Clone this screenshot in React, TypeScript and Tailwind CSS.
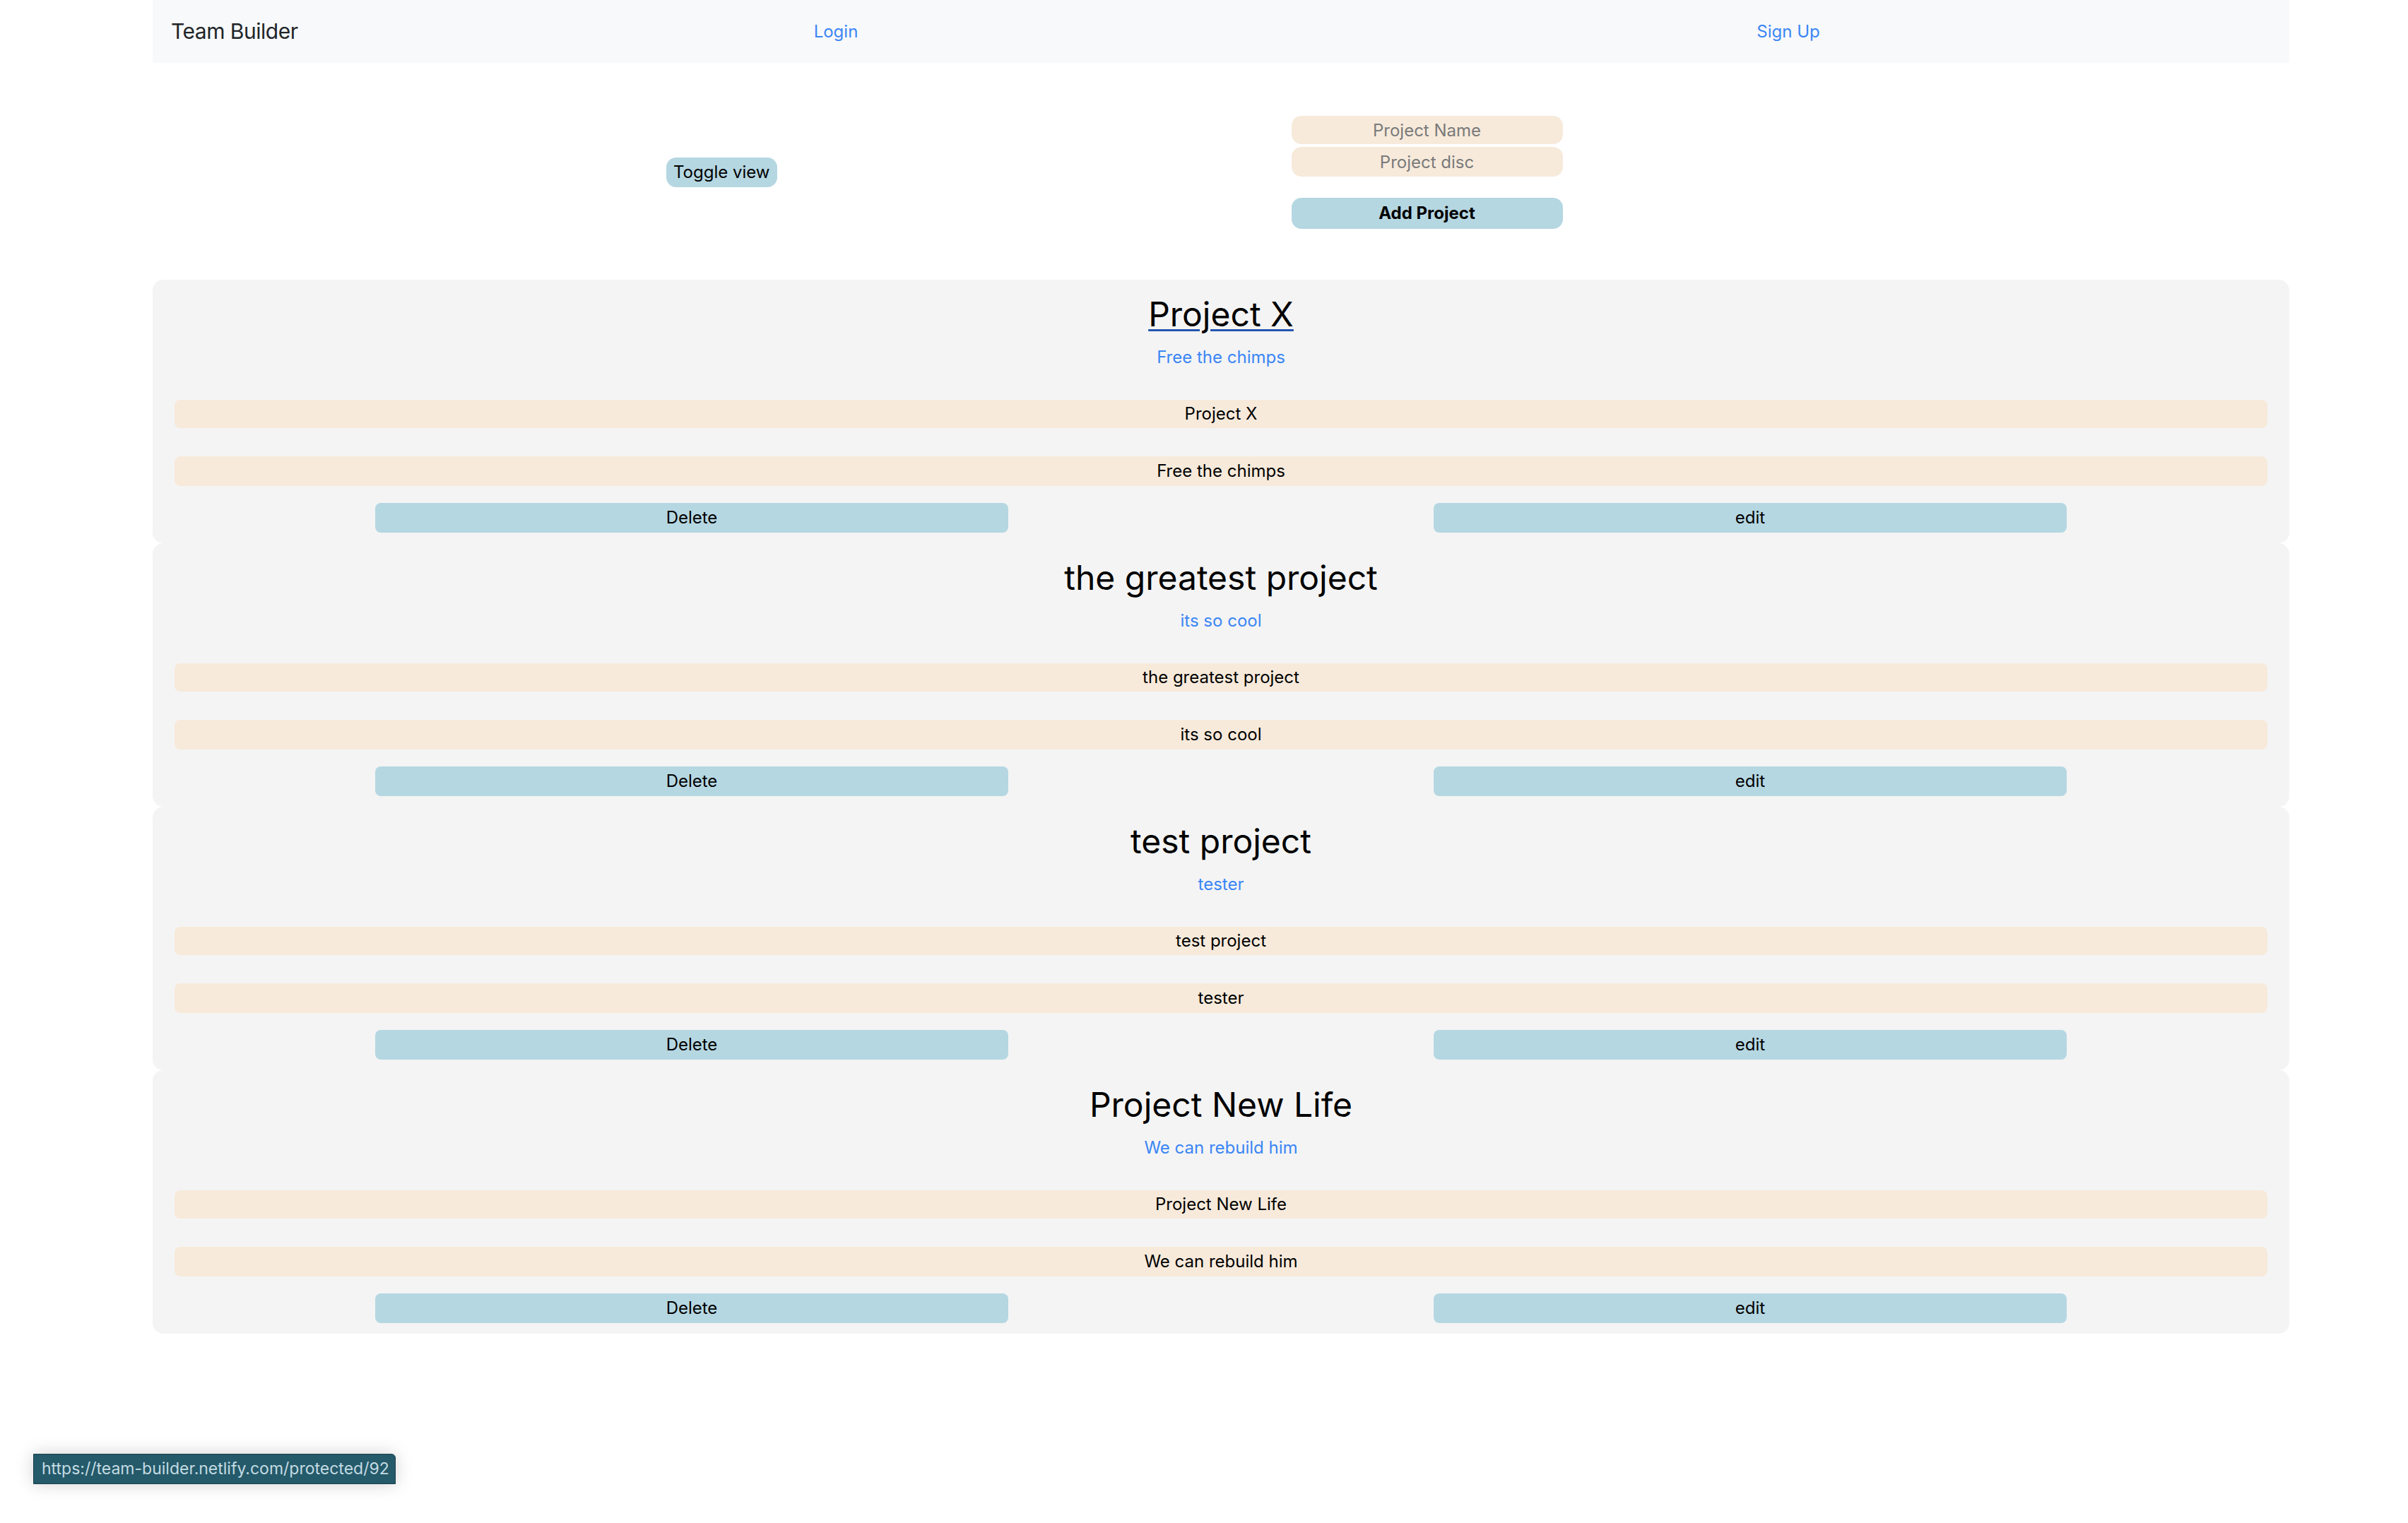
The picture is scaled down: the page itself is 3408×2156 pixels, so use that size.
import React from "react";

type Project = { id: number; name: string; disc: string };

const projects: Project[] = [
    { id: 92, name: "Project X", disc: "Free the chimps" },
    { id: 93, name: "the greatest project", disc: "its so cool" },
    { id: 94, name: "test project", disc: "tester" },
    { id: 95, name: "Project New Life", disc: "We can rebuild him" },
];

const ProjectCard = ({ project, hovered }: { project: Project, hovered?: boolean }) => {
    return (
        <div className="h-[373px] rounded-[15px] bg-[#f4f4f4] pt-[20px] px-[31px] flex flex-col">
            <h2 className={"text-center text-[48px] leading-[58px] text-black " + (hovered ? "underline decoration-[#2556b0] decoration-[3px] underline-offset-[4px]" : "")}>
                {project.name}
            </h2>
            <p className="mt-[14px] text-center text-[24px] leading-[36px] text-[#3b86f5]">{project.disc}</p>
            <div className="mt-[42px] h-[40px] rounded-[8px] bg-[#f7eadb] text-center text-[24px] leading-[40px] text-black">
                {project.name}
            </div>
            <div className="mt-[40px] h-[42px] rounded-[8px] bg-[#f7eadb] text-center text-[24px] leading-[42px] text-black">
                {project.disc}
            </div>
            <div className="mt-[24px] flex justify-between px-[284px]">
                <button className="w-[896px] h-[42px] rounded-[8px] bg-[#b5d7e2] text-[24px] text-black">Delete</button>
                <button className="w-[896px] h-[42px] rounded-[8px] bg-[#b5d7e2] text-[24px] text-black">edit</button>
            </div>
        </div>
    );
}

export default function App() {
    return (
        <div className="relative min-h-[2156px] bg-white font-['Inter','Liberation_Sans',sans-serif]">
            <div className="mx-[216px] w-[3024px]">
                <nav className="h-[89px] bg-[#f8f9fa] grid grid-cols-[300px_1334px_1362px] items-center">
                    <span className="pl-[26px] text-[30px] text-[#212529] tracking-[-0.5px]">Team Builder</span>
                    <a className="justify-self-center text-[24px] text-[#3b86f5]">Login</a>
                    <a className="justify-self-center text-[24px] text-[#3b86f5]">Sign Up</a>
                </nav>

                <div className="flex items-center pt-[75px] pb-[72px]">
                    <button className="ml-[727px] h-[42px] px-[10px] rounded-[14px] bg-[#b5d7e2] text-[24px] text-black">Toggle view</button>
                    <div className="ml-[728px] w-[384px] flex flex-col">
                        <input placeholder="Project Name" className="h-[40px] rounded-[14px] bg-[#f7eadb] text-center text-[24px] placeholder:text-[#7a7a7a] outline-none" />
                        <input placeholder="Project disc" className="mt-[4px] h-[42px] rounded-[14px] bg-[#f7eadb] text-center text-[24px] placeholder:text-[#7a7a7a] outline-none" />
                        <button className="mt-[30px] h-[44px] rounded-[14px] bg-[#b5d7e2] text-[24px] font-bold text-black">Add Project</button>
                    </div>
                </div>

                <div className="flex flex-col">
                    {projects.map((p, i) => (
                        <ProjectCard key={p.id} project={p} hovered={i === 0} />
                    ))}
                </div>
            </div>

            {/* browser status bubble */}
            <div className="absolute left-[47px] top-[2058px] w-[513px] h-[43px] bg-[#245a6a] border border-[#1c3f4a] rounded-tr-[6px] shadow-[0_0_24px_rgba(0,0,0,0.18)] pl-[11px] flex items-center text-[23px] text-[#c4dbe2]">
                https://team-builder.netlify.com/protected/92
            </div>
        </div>
    );
}
